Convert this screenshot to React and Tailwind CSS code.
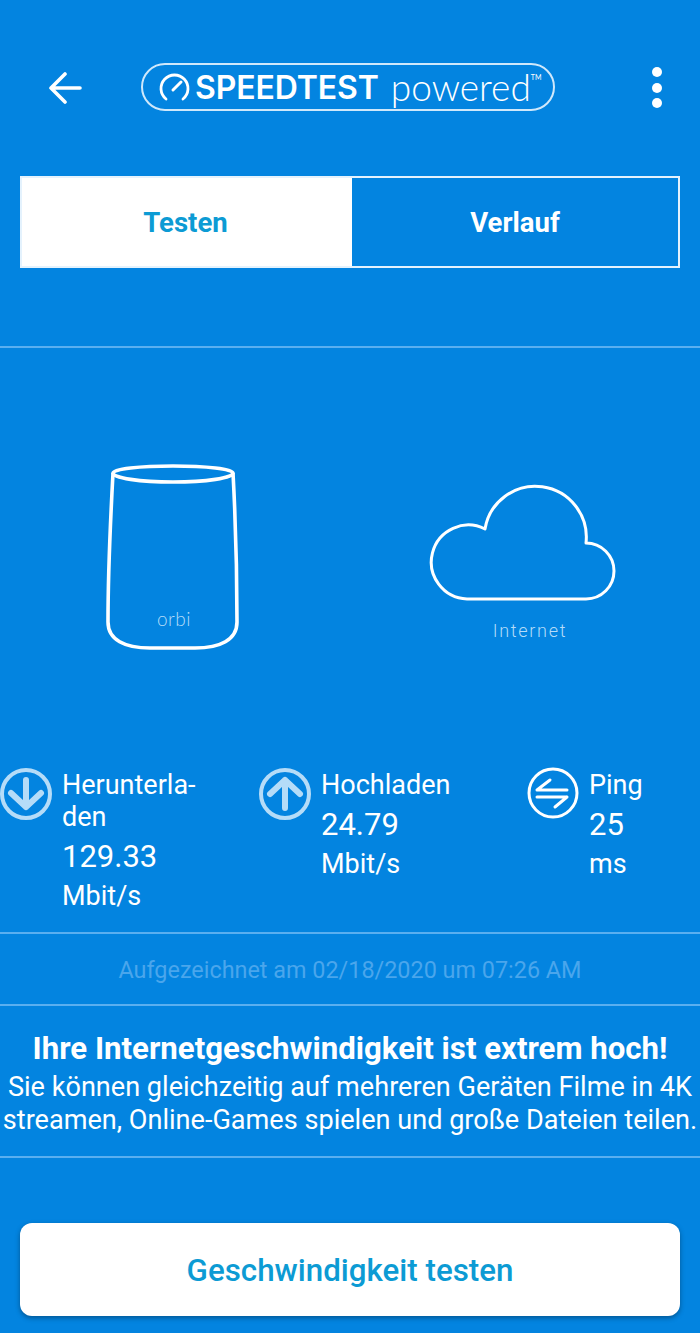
const roboto = 'font-["Roboto",sans-serif]';

function Gauge() {
  return (
    <svg width="34" height="30" viewBox="0 0 34 30" fill="none" stroke="white" strokeLinecap="round">
      <path d="M8 27 A13.5 13.5 0 1 1 25 27" strokeWidth="2.8" />
      <path d="M15 18 L23 10" strokeWidth="3" />
    </svg>
  );
}

function StatIcon({ type }) {
  const color = type === 'ping' ? 'white' : '#b5dcf8';
  return (
    <svg width="52" height="52" viewBox="0 0 52 52" fill="none" stroke={color} strokeLinecap="round" strokeLinejoin="round" className={type === 'ping' ? 'shrink-0 -mt-[1px]' : 'shrink-0'}>
      <circle cx="26" cy="26" r="24" strokeWidth={type === 'ping' ? 3 : 4} />
      {type === 'down' && <path d="M26 12 V39 M11 25 L26 39 L41 25" strokeWidth="6" />}
      {type === 'up' && <path d="M26 40 V12 M11 26 L26 12 L41 26" strokeWidth="6" />}
      {type === 'ping' && <path d="M10 23 H40 M10 23 L23 13 M40 30 H10 M40 30 L28 40" strokeWidth="3" />}
    </svg>
  );
}

function Stat({ type, label, value, unit, width }) {
  return (
    <div className={`flex items-start ${width}`}>
      <StatIcon type={type} />
      <div className="text-white text-[27px] ml-[10px] pt-[1px]">
        <div className="leading-[32px]">{label}</div>
        <div className="text-[31px] leading-[40px] mt-[4px]">{value}</div>
        <div className="leading-[38px]">{unit}</div>
      </div>
    </div>
  );
}

export default function App() {
  return (
    <div className={`w-[700px] h-[1333px] overflow-hidden bg-[#0384e0] ${roboto}`}>
      {/* Header */}
      <div className="h-[176px] pt-[63px] pl-[49px] pr-[38px] flex items-start justify-between">
        <svg width="34" height="34" viewBox="0 0 34 34" fill="none" stroke="white" strokeWidth="3.6" strokeLinecap="round" strokeLinejoin="round" className="mt-[8px]">
          <path d="M2 17 H31 M16 3 L2 17 L16 31" />
        </svg>
        <div className="ml-[58px] w-[414px] h-[48px] rounded-full border-2 border-[#cfe8fb] flex items-center pl-[15px] text-white whitespace-nowrap">
          <Gauge />
          <span className="ml-[3px] mt-[2px] text-[32px] font-['Inter',sans-serif] font-semibold leading-none tracking-[-0.1px]">SPEEDTEST</span>
          <span className="ml-[12px] -mt-[2px] text-[37px] font-light leading-none font-['Lato',sans-serif]">powered</span>
          <span className="text-[7px] leading-none mb-[20px] font-['Lato',sans-serif]">TM</span>
        </div>
        <div className="ml-auto w-[10px] flex flex-col gap-[5.5px] pt-[4px]">
          <div className="w-[10px] h-[10px] rounded-full bg-white" />
          <div className="w-[10px] h-[10px] rounded-full bg-white" />
          <div className="w-[10px] h-[10px] rounded-full bg-white" />
        </div>
      </div>

      {/* Tabs */}
      <div className="mx-[20px] h-[92px] flex border-2 border-[#e4f2fd] text-[27.5px] font-bold">
        <div className="w-[330px] pr-[3px] pt-[2px] bg-white text-[#0c9bd4] flex items-center justify-center">Testen</div>
        <div className="flex-1 pt-[2px] text-white flex items-center justify-center">Verlauf</div>
      </div>

      <div className="mt-[78px] h-[2px] bg-[#5aaff0]" />

      {/* Devices */}
      <div className="h-[420px] flex items-start">
        <div className="relative ml-[90px] mt-[116px] w-[170px] h-[190px]">
          <svg width="170" height="190" viewBox="0 0 170 190" fill="none" stroke="white" strokeWidth="3.6" strokeLinejoin="round">
            <path d="M23 9 C21 46 18 116 18 158 C18 176 35 184 60 184 H105 C130 184 147 176 147 158 C147 116 145 46 143 9" />
            <path d="M23 9 C23 5 50 2 83 2 C116 2 143 5 143 9 C143 14 116 18 83 18 C50 18 23 14 23 9 Z" />
          </svg>
          <span className="absolute left-[67px] top-[145px] text-[19px] leading-none font-light text-[#b5dcf8] font-['Lato',sans-serif] tracking-[0.5px]">orbi</span>
        </div>
        <div className="ml-[161px] mt-[132px] w-[210px] flex flex-col items-center">
          <svg width="210" height="124" viewBox="0 10 210 124" fill="none" stroke="white" strokeWidth="3" strokeLinejoin="round">
            <path d="M46 129 H165 A28 28 0 0 0 165 73 A51 51 0 0 0 64 59 A37 37 0 1 0 46 129 Z" />
          </svg>
          <span className="ml-[8px] text-[18px] leading-none text-[#b5dcf8] font-light tracking-[1.7px] mt-[18px]">Internet</span>
        </div>
      </div>

      {/* Stats */}
      <div className="h-[164px] flex items-start">
        <Stat type="down" label={<>Herunterla-<br />den</>} value="129.33" unit="Mbit/s" width="w-[259px]" />
        <Stat type="up" label="Hochladen" value="24.79" unit="Mbit/s" width="w-[268px]" />
        <Stat type="ping" label="Ping" value="25" unit="ms" width="flex-1" />
      </div>

      <div className="h-[2px] bg-[#5aaff0]" />
      <div className="h-[70px] pt-[4px] flex items-center justify-center text-[23.4px] text-[#4aa6ec]">
        Aufgezeichnet am 02/18/2020 um 07:26 AM
      </div>
      <div className="h-[2px] bg-[#5aaff0]" />

      {/* Result */}
      <div className="h-[150px] pt-[25px] text-center text-white whitespace-nowrap">
        <div className="text-[31.2px] font-bold leading-[36px]">Ihre Internetgeschwindigkeit ist extrem hoch!</div>
        <div className="text-[27.1px] leading-[33px] mt-[4px]">Sie können gleichzeitig auf mehreren Geräten Filme in 4K</div>
        <div className="text-[27.1px] leading-[33px]">streamen, Online-Games spielen und große Dateien teilen.</div>
      </div>
      <div className="h-[2px] bg-[#5aaff0]" />

      <div className="mx-[20px] mt-[65px] h-[93px] pt-[3px] rounded-[12px] bg-white shadow-[0_2px_5px_rgba(0,0,0,0.35)] flex items-center justify-center text-[#0c9bd4] text-[31.3px] font-medium">
        Geschwindigkeit testen
      </div>
    </div>
  );
}
